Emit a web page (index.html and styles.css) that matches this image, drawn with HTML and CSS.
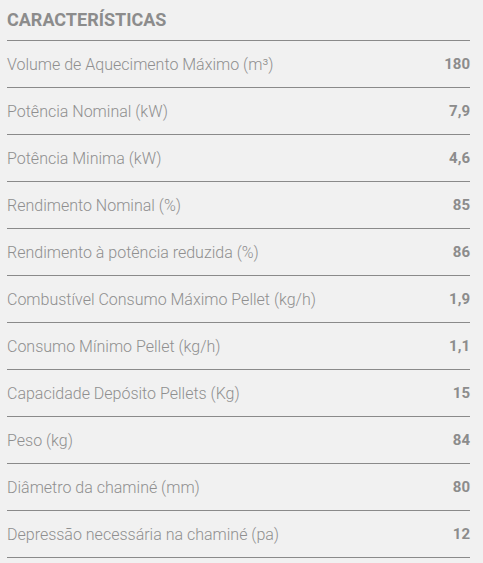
FILE: index.html
```html
<!DOCTYPE html>
<html lang="pt">
<head>
<meta charset="utf-8">
<link rel="stylesheet" href="styles.css">
</head>
<body>
<section class="specs">
  <h2 class="specs-title">CARACTERÍSTICAS</h2>
  <div class="row"><span class="label">Volume de Aquecimento Máximo (m³)</span><span class="value">180</span></div>
  <div class="row"><span class="label">Potência Nominal (kW)</span><span class="value">7,9</span></div>
  <div class="row"><span class="label">Potência Minima (kW)</span><span class="value">4,6</span></div>
  <div class="row"><span class="label">Rendimento Nominal (%)</span><span class="value">85</span></div>
  <div class="row"><span class="label">Rendimento à potência reduzida (%)</span><span class="value">86</span></div>
  <div class="row"><span class="label">Combustível Consumo Máximo Pellet (kg/h)</span><span class="value">1,9</span></div>
  <div class="row"><span class="label">Consumo Mínimo Pellet (kg/h)</span><span class="value">1,1</span></div>
  <div class="row"><span class="label">Capacidade Depósito Pellets (Kg)</span><span class="value">15</span></div>
  <div class="row"><span class="label">Peso (kg)</span><span class="value">84</span></div>
  <div class="row"><span class="label">Diâmetro da chaminé (mm)</span><span class="value">80</span></div>
  <div class="row"><span class="label">Depressão necessária na chaminé (pa)</span><span class="value">12</span></div>
</section>
</body>
</html>
```
FILE: styles.css
```css
html, body {
  margin: 0;
  padding: 0;
  background: #f1f1f1;
}
body {
  font-family: Roboto, "Liberation Sans", sans-serif;
  color: #8c8c8c;
}
.specs {
  width: 463px;
  margin-left: 7px;
}
.specs-title {
  margin: 0;
  height: 41px;
  box-sizing: border-box;
  padding-top: 9px;
  font-size: 18px;
  font-weight: 700;
  line-height: 22px;
  color: #8c8c8c;
  border-bottom: 1px solid #8a8a8a;
}
.row {
  display: flex;
  justify-content: space-between;
  align-items: center;
  height: 47px;
  box-sizing: border-box;
  border-bottom: 1px solid #8a8a8a;
  font-size: 16px;
}
.label {
  font-weight: 300;
  color: #8f8f8f;
}
.value {
  font-weight: 700;
  font-size: 15px;
  color: #8c8c8c;
}
```
